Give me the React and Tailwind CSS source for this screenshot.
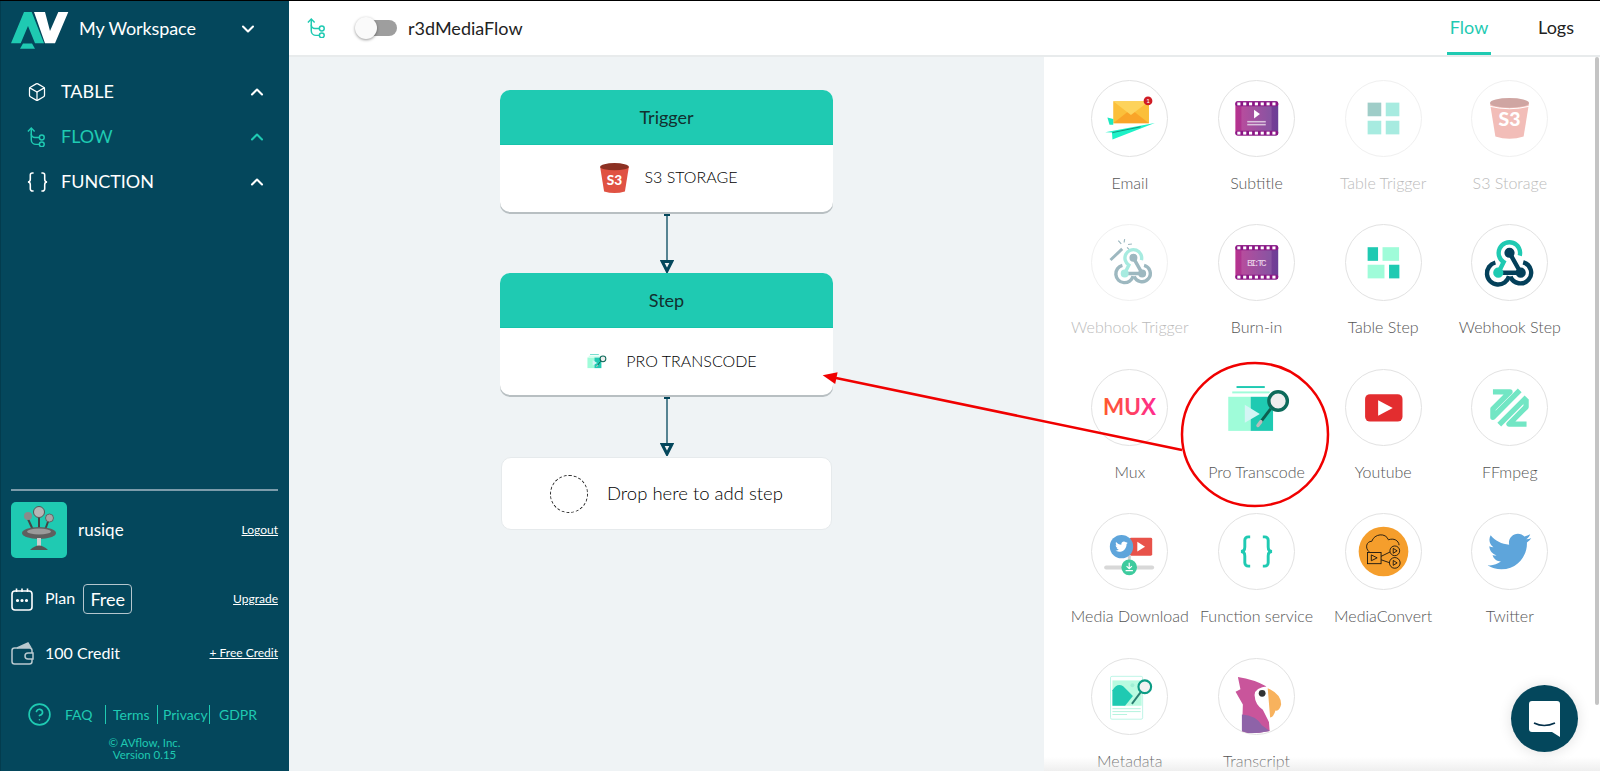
import React from 'react'
import { Box, ChevronDown, ChevronUp, CircleHelp } from 'lucide-react'
import { FaTwitter } from 'react-icons/fa'

function FlowIcon({ className }) {
  return (
    <svg viewBox="0 0 17 19" fill="none" stroke="currentColor" strokeWidth="1.4" className={className}>
      <path d="M0.8 4.2 L4 1 L7.2 4.2" />
      <path d="M4 1 V12 a4.5 4.5 0 0 0 4.5 4.5 H11.6" />
      <path d="M4 6.5 a3.5 3.5 0 0 0 3.5 3.5 H11.6" />
      <circle cx="14" cy="10" r="2.3" />
      <circle cx="14" cy="16.5" r="2.3" />
    </svg>
  )
}

function BraceMarks({ color, width = 3 }) {
  return (
    <g fill="none" stroke={color} strokeWidth={width}>
      <path d="M32 23.5 h-2 a3.5 3.5 0 0 0 -3.5 3.5 v7 q0 4.5 -4 4.5 q4 0 4 4.5 v7 a3.5 3.5 0 0 0 3.5 3.5 h2" />
      <path d="M45 23.5 h2 a3.5 3.5 0 0 1 3.5 3.5 v7 q0 4.5 4 4.5 q-4 0 -4 4.5 v7 a3.5 3.5 0 0 1 -3.5 3.5 h-2" />
    </g>
  )
}

function Logo() {
  return (
    <svg viewBox="0 0 70 50" className="w-[70px] h-[50px] shrink-0 -mt-[6px]">
      <polygon points="11,42.3 24,11 31.7,11 44,42.3 35,42.3 28,25 20.7,42.3" fill="#1fcab2" />
      <polygon points="20,47.7 23,42.5 32,42.5 35,47.7" fill="#1fcab2" />
      <polygon points="34,11 45,11 50,30 58.3,11 68.3,11 55,42.3 45,42.3" fill="#fff" />
    </svg>
  )
}

function Avatar() {
  return (
    <div className="w-14 h-14 rounded-[5px] bg-[#1fcab2] shrink-0 flex items-center justify-center">
      <svg viewBox="0 0 56 56" className="w-14 h-14">
        <g stroke="#444" strokeWidth="2">
          <line x1="17" y1="17" x2="22" y2="28" />
          <line x1="28" y1="13" x2="28" y2="28" />
          <line x1="38" y1="17" x2="34" y2="28" />
        </g>
        <circle cx="17" cy="14" r="4" fill="#8a8a8a" />
        <circle cx="28" cy="10" r="5.5" fill="#b5b5b5" stroke="#555" strokeWidth="1" />
        <circle cx="38.5" cy="16" r="4" fill="#a5a5a5" stroke="#555" strokeWidth="0.8" />
        <ellipse cx="28" cy="31" rx="17" ry="6" fill="#5f5f5f" />
        <ellipse cx="28" cy="29.5" rx="12" ry="3" fill="#9a9a9a" />
        <rect x="26" y="36" width="4" height="10" fill="#ccc" />
        <path d="M19 48 q9 -9 18 0 z" fill="#555" />
      </svg>
    </div>
  )
}

function NavItem({ icon, label, active }) {
  return (
    <div className={`flex items-center h-[45px] pl-[27px] pr-[22px] ${active ? 'text-[#1fcab2]' : 'text-white'}`}>
      <div className="w-[34px] shrink-0">{icon}</div>
      <span className="text-[18px] flex-1">{label}</span>
      <ChevronUp size={20} strokeWidth={2.5} />
    </div>
  )
}

function Sidebar() {
  return (
    <aside className="w-[289px] shrink-0 bg-[#04475c] text-white flex flex-col border-l border-[#033c4e]">
      <div className="flex items-center h-[55px] pr-[31px] -ml-px">
        <Logo />
        <span className="text-[18px] tracking-[-0.1px] ml-[9px] flex-1">My Workspace</span>
        <ChevronDown size={20} strokeWidth={2.5} />
      </div>
      <nav className="pt-[13px] flex flex-col -ml-px">
        <NavItem icon={<Box size={20} strokeWidth={1.5} />} label="TABLE" />
        <NavItem icon={<FlowIcon className="w-[18px] h-[20px]" />} label="FLOW" active />
        <NavItem
          icon={
            <svg viewBox="21 22 35 33" className="w-[21px] h-[20px]">
              <BraceMarks color="#fff" width={2.6} />
            </svg>
          }
          label="FUNCTION"
        />
      </nav>

      <div className="mt-auto pl-[10px] pr-[11px] pb-[10px]">
        <div className="h-0.5 bg-[#7c9cab]" />
        <div className="flex items-center mt-[11px]">
          <Avatar />
          <span className="text-[17px] ml-[11px] flex-1">rusiqe</span>
          <a className="text-[12px] underline">Logout</a>
        </div>
        <div className="flex items-center mt-[26px] h-[30px]">
          <svg viewBox="0 0 22 23" fill="none" stroke="#fff" strokeWidth="1.6" className="w-[22px] h-[23px] shrink-0">
            <rect x="1" y="3" width="20" height="19" rx="3" />
            <path d="M5.5 0.5 V4 M11 0.5 V4 M16.5 0.5 V4" />
            <circle cx="6.5" cy="12.5" r="0.8" fill="#fff" />
            <circle cx="11" cy="12.5" r="0.8" fill="#fff" />
            <circle cx="15.5" cy="12.5" r="0.8" fill="#fff" />
          </svg>
          <span className="text-[16px] ml-3 -mt-[2px]">Plan</span>
          <span className="text-[18px] ml-2 h-[30px] w-[49px] flex items-center justify-center border border-[#b5c6cd] rounded-[4px]">Free</span>
          <a className="text-[12px] underline ml-auto">Upgrade</a>
        </div>
        <div className="flex items-center mt-[26px] h-[26px]">
          <svg viewBox="0 0 23 23" fill="none" stroke="#b9c9cf" strokeWidth="1.5" className="w-[23px] h-[23px] shrink-0">
            <path d="M6 6 L17 1 L20 6" fill="#b9c9cf" />
            <rect x="1" y="6" width="20" height="16" rx="2.5" />
            <path d="M22 11 H17 a3 3 0 0 0 0 6 H22 Z" fill="#04475c" />
          </svg>
          <span className="text-[16px] ml-[11px]">100 Credit</span>
          <a className="text-[12px] underline ml-auto">+ Free Credit</a>
        </div>
        <div className="flex items-center mt-[36px] text-[#1fcab2] text-[14px] pl-[16px]">
          <CircleHelp size={25} strokeWidth={1.6} className="shrink-0" />
          <span className="ml-[13px] w-[40px]">FAQ</span>
          <span className="w-[52px] pl-[7px] border-l border-[#1fcab2] leading-[19px]">Terms</span>
          <span className="w-[52px] pl-[5px] border-l border-[#1fcab2] leading-[19px]">Privacy</span>
          <span className="pl-[9px] border-l border-[#1fcab2] leading-[19px]">GDPR</span>
        </div>
        <div className="mt-[10px] text-center text-[#1fcab2] text-[11.5px] leading-[12px]">
          <div>© AVflow, Inc.</div>
          <div>Version 0.15</div>
        </div>
      </div>
    </aside>
  )
}

function TopBar() {
  return (
    <header className="h-[56px] shrink-0 bg-white border-b-2 border-[#e8ebec] flex items-center pl-[18px] pr-[26px]">
      <FlowIcon className="w-[18px] h-[20px] text-[#1fcab2]" />
      <div className="relative w-[42px] h-[22px] ml-[30px] flex items-center">
        <div className="ml-[11px] w-[31px] h-[16px] rounded-full bg-[#9e9e9e]" />
        <div className="absolute left-0 top-0 w-[22px] h-[22px] rounded-full bg-[#fafafa] shadow-[0_1px_3px_rgba(0,0,0,0.4)]" />
      </div>
      <span className="ml-[11px] text-[18px] text-[#222]">r3dMediaFlow</span>
      <div className="ml-auto flex h-full text-[18px]">
        <div className="relative w-[44px] flex items-center justify-center text-[#1fcab2] pb-px">
          Flow
          <div className="absolute left-0 right-0 bottom-0 h-[3px] bg-[#1fcab2]" />
        </div>
        <div className="ml-[47px] flex items-center text-[#222] pb-px">Logs</div>
      </div>
    </header>
  )
}

function S3Bucket({ className }) {
  return (
    <svg viewBox="17 16 43 46" className={className}>
      <path d="M18.5 23 L24 57 Q38.5 61.5 53 57 L58.5 23 Z" fill="#e05243" />
      <ellipse cx="38.5" cy="22.5" rx="20" ry="5" fill="#8c3123" />
      <text x="38.5" y="48" textAnchor="middle" fontSize="19" fontWeight="900" fill="#fff" fontFamily="Lato, sans-serif">S3</text>
    </svg>
  )
}

function ProTranscodeMarks() {
  return (
    <g>
      <rect x="18" y="16.5" width="29" height="2" fill="#1fcab2" />
      <rect x="13.6" y="22" width="38.4" height="2" fill="#9ffcd9" />
      <rect x="9.5" y="27.5" width="23" height="35" fill="#9ffcd9" />
      <rect x="32.5" y="27.5" width="23" height="35" fill="#1fcab2" />
      <polygon points="26.5,35.8 41.9,45.2 26.5,54.2" fill="#d4f5f5" />
      <line x1="53" y1="40" x2="43" y2="53" stroke="#0d5f50" strokeWidth="3" />
      <line x1="43" y1="53" x2="40" y2="57" stroke="#bbb" strokeWidth="3.5" strokeLinecap="round" />
      <circle cx="60.7" cy="31.8" r="9.5" fill="#eee" stroke="#0d6a5a" strokeWidth="3.5" />
    </g>
  )
}

function FlowArrow() {
  return (
    <div className="flex justify-center h-[61px]">
      <svg viewBox="0 0 14 61" className="w-[14px] h-[61px]">
        <rect x="4" y="2" width="6" height="2" fill="#04475c" />
        <line x1="7" y1="3" x2="7" y2="50" stroke="#04475c" strokeWidth="1.3" />
        <path d="M2.2 49.5 H11.8 L7 59 Z" fill="none" stroke="#04475c" strokeWidth="3" />
      </svg>
    </div>
  )
}

function NodeCard({ title, children }) {
  return (
    <div className="rounded-[10px] bg-white shadow-[0_2px_0_#b8bfc2] overflow-hidden">
      <div className="h-[55px] bg-[#1fcab2] flex items-center justify-center text-[18px] text-[#12302f] border-b border-[#17c3aa]">{title}</div>
      <div className="h-[67px] flex items-center justify-center text-[16px] font-light text-[#000]">{children}</div>
    </div>
  )
}

function Canvas() {
  return (
    <div className="flex-1 bg-[#eff3f5] pl-[211px] pt-[33px]">
      <div className="w-[333px]">
        <NodeCard title="Trigger">
          <div className="flex items-center pl-[3px] -mt-[3px]">
            <S3Bucket className="w-[31px] h-[33px] mt-[3px]" />
            <span className="ml-[15px]">S3 STORAGE</span>
          </div>
        </NodeCard>
        <FlowArrow />
        <NodeCard title="Step">
          <div className="flex items-center pl-[11px] -mt-[2px]">
            <svg viewBox="8 14 66 50" className="w-[20px] h-[16px]">
              <ProTranscodeMarks />
            </svg>
            <span className="ml-[19px]">PRO TRANSCODE</span>
          </div>
        </NodeCard>
        <FlowArrow />
        <div className="mx-px mt-px h-[73px] bg-white rounded-[10px] border border-[#e6eaec] flex items-center pl-[48px] text-[18.5px] font-light text-[#000]">
          <div className="w-[38px] h-[38px] rounded-full border border-dashed border-[#222]" />
          <span className="ml-[19px]">Drop here to add step</span>
        </div>
      </div>
    </div>
  )
}

function FilmStrip({ children }) {
  const holes = [0, 1, 2, 3, 4, 5, 6]
  return (
    <g>
      <defs>
        <linearGradient id="film" x1="0" x2="1" y1="0" y2="0">
          <stop offset="0" stopColor="#b8338f" />
          <stop offset="1" stopColor="#6a3f97" />
        </linearGradient>
      </defs>
      <rect x="16.8" y="20.8" width="44" height="35.2" rx="3" fill="url(#film)" />
      <rect x="16.8" y="20.8" width="44" height="5" rx="2" fill="#8a1585" />
      <rect x="16.8" y="51" width="44" height="5" rx="2" fill="#8a1585" />
      <rect x="23" y="26" width="31" height="25" fill="#fff" opacity="0.12" />
      {holes.map((i) => (
        <g key={i} fill="#fff">
          <rect x={18.8 + i * 6} y="22" width="3.2" height="3" />
          <rect x={18.8 + i * 6} y="52" width="3.2" height="3" />
        </g>
      ))}
      {children}
    </g>
  )
}

function WebhookMarks({ teal, light, dark }) {
  return (
    <g fill="none" strokeWidth="4.5">
      <path d="M27 49 L32.5 38 A 11 11 0 1 1 49 31.5" stroke={teal} />
      <path d="M38.5 28.5 L50 49 M27 49 H50" stroke={dark} />
      <path d="M24 38.5 A 11.5 11.5 0 1 0 38 52.5" stroke={dark} />
      <path d="M52.5 38.3 A 11 11 0 1 1 39.5 53" stroke={dark} />
      <circle cx="38.5" cy="28.5" r="3" fill={dark} stroke={dark} />
      <circle cx="50" cy="49" r="3" fill={dark} stroke={dark} />
      <circle cx="27" cy="49" r="3" fill={light} stroke={light} />
    </g>
  )
}

const ICONS = {
  email: (
    <g>
      <rect x="21.8" y="20.8" width="36.7" height="22.5" fill="#fbbf3a" />
      <path d="M21.8 43.3 L40 29 L58.5 43.3 Z" fill="#f9a428" />
      <path d="M21.8 20.8 L40 35 L58.5 20.8 Z" fill="#fdd35c" />
      <circle cx="57.5" cy="20.5" r="4.5" fill="#d01c24" />
      <text x="57.5" y="22.8" textAnchor="middle" fontSize="6.5" fill="#fff" fontFamily="Lato, sans-serif">1</text>
      <polygon points="15.8,37.5 21.8,39 21.8,45 18,45" fill="#1de9c0" />
      <polygon points="13.5,52.5 64.5,43 21,60 20.5,53" fill="#1df2c8" />
      <line x1="21" y1="53" x2="50" y2="47" stroke="#0f6b5c" strokeWidth="0.7" />
    </g>
  ),
  subtitle: (
    <FilmStrip>
      <polygon points="36,29.5 42,34 36,38.5" fill="#fff" />
      <rect x="29" y="41" width="19" height="1.6" fill="#d9c2dc" />
      <rect x="29" y="44" width="19" height="1.6" fill="#d9c2dc" />
    </FilmStrip>
  ),
  tableTrigger: (
    <g>
      <rect x="22.2" y="22.2" width="14" height="14" fill="#9fcdc8" />
      <rect x="40.8" y="22.2" width="14" height="14" fill="#a7ebe0" />
      <rect x="22.2" y="40.8" width="14" height="14" fill="#a7ebe0" />
      <rect x="40.8" y="40.8" width="14" height="14" fill="#a7ebe0" />
    </g>
  ),
  s3: (
    <g>
      <path d="M18.5 23 L24 57 Q38.5 61.5 53 57 L58.5 23 Z" fill="#f2bdb8" />
      <path d="M18.5 26 Q38.5 31 58.5 26" stroke="#fff" strokeWidth="1" fill="none" />
      <ellipse cx="38.5" cy="22.5" rx="20" ry="5" fill="#cfa5a2" />
      <text x="38.5" y="46.5" textAnchor="middle" fontSize="20" fontWeight="900" fill="#fff" fontFamily="Lato, sans-serif">S3</text>
    </g>
  ),
  webhookTrigger: (
    <g>
      <line x1="19" y1="36" x2="31" y2="24.5" stroke="#9db8c0" strokeWidth="3" />
      <path d="M27 16 L30 19.5 M33.5 14.5 L33 18 M41 19.5 L37 20 M36 23 L39 26" stroke="#9db8c0" strokeWidth="1.2" />
      <g transform="translate(12.5 11.5) scale(0.78)">
        <WebhookMarks teal="#a7ebe0" light="#a7ebe0" dark="#9db8c0" />
      </g>
    </g>
  ),
  burnin: (
    <FilmStrip>
      <text x="38.8" y="42" textAnchor="middle" fontSize="10" fill="#ead6ea" fontFamily="Liberation Mono, monospace" textLength="20">BI:TC</text>
    </FilmStrip>
  ),
  tableStep: (
    <g>
      <rect x="22.2" y="22.8" width="10.7" height="14" fill="#1fcab2" />
      <rect x="37.5" y="22.8" width="17" height="14" fill="#9ffcd9" />
      <rect x="22.2" y="40.8" width="17.3" height="14" fill="#9ffcd9" />
      <rect x="44.2" y="40.8" width="10.6" height="14" fill="#1fcab2" />
    </g>
  ),
  webhookStep: <WebhookMarks teal="#1fcab2" light="#1fcab2" dark="#04405a" />,
  mux: (
    <g>
      <defs>
        <linearGradient id="mux" x1="0" x2="1" y1="0" y2="0">
          <stop offset="0" stopColor="#ff5a2c" />
          <stop offset="1" stopColor="#ff2b8f" />
        </linearGradient>
      </defs>
      <text x="38.5" y="46" textAnchor="middle" fontSize="23" fontWeight="700" fill="url(#mux)" fontFamily="Lato, sans-serif">MUX</text>
    </g>
  ),
  youtube: (
    <g>
      <rect x="19.6" y="24.8" width="38.4" height="28.2" rx="5" fill="#e32d2f" />
      <polygon points="33,31 48,39 33,47" fill="#fff" />
    </g>
  ),
  ffmpeg: (
    <g fill="none" stroke="#72e6c4" strokeWidth="5.5" strokeLinejoin="round">
      <path d="M21.5 22.5 H39 L21.5 40 V48.5 L49 21" />
      <path d="M28 56 L56 28" />
      <path d="M55.5 30 V38 L38 55.5 H56" />
    </g>
  ),
  mediaDownload: (
    <g>
      <rect x="38.8" y="24.5" width="23" height="18.3" rx="1.5" fill="#e8524a" />
      <polygon points="46.5,28.5 54.5,33.5 46.5,38.5" fill="#fff" />
      <rect x="36.8" y="42" width="3" height="12" fill="#cfcfcf" />
      <rect x="12.5" y="52.8" width="51.3" height="4.2" rx="2" fill="#d8d8d8" />
      <circle cx="30.3" cy="33.5" r="12" fill="#5ea5db" />
      <FaTwitter x="23.8" y="27" size="13" color="#fff" />
      <circle cx="38.2" cy="54.8" r="8" fill="#3ecb9e" />
      <path d="M38.2 50 V56 M35.5 53.5 L38.2 56.2 L41 53.5 M34.5 58.2 H42" stroke="#fff" strokeWidth="1.2" fill="none" />
    </g>
  ),
  functionService: <BraceMarks color="#1fcab2" />,
  mediaConvert: (
    <g>
      <circle cx="38.5" cy="38.5" r="25.5" fill="#f59e2c" />
      <g fill="none" stroke="#111" strokeWidth="0.9">
        <path d="M24 39 C19 35 21 28 26.5 28 C29 20 41 19 43.5 26.5 C49 24.5 54 27 54.5 32" />
        <rect x="22" y="39.5" width="14" height="11.5" />
        <polygon points="26,42 32,45 26,48" />
        <circle cx="50.1" cy="37.8" r="5" />
        <polygon points="48.5,35.3 52.5,37.8 48.5,40.3" />
        <circle cx="50.1" cy="50.2" r="5.5" />
        <polygon points="48.5,47.7 52.5,50.2 48.5,52.7" />
        <path d="M36 43.5 L45.2 39 M36 47 L44.6 50" />
      </g>
    </g>
  ),
  twitter: <FaTwitter x="16" y="16" size="45" color="#5ea5db" />,
  metadata: (
    <g>
      <rect x="19" y="17.8" width="33" height="44" rx="1.5" fill="#fff" stroke="#bdf5e6" strokeWidth="1" />
      <rect x="21" y="22" width="30" height="26" fill="#b8fbe0" />
      <path d="M21 48 V32 Q26 24 32 28 L42 38 L34 48 Z" fill="#1fcab2" />
      <circle cx="41.5" cy="27" r="2" fill="#9ff0d5" />
      <line x1="41" y1="46" x2="50" y2="34" stroke="#2a7f72" strokeWidth="2" />
      <circle cx="54.2" cy="28.5" r="6.5" fill="#f2f2f2" stroke="#0c9c85" strokeWidth="2.2" />
      <path d="M21 51 H50 M21 54 H50 M21 57 H36" stroke="#9ff0d5" strokeWidth="0.8" />
    </g>
  ),
  transcript: (
    <g>
      <path d="M19.4 18.5 Q36 21 48.4 28 L52 74 Q38 77 23.5 76 L24.5 46.8 L17 33.5 L22 31 Z" fill="#c9559b" />
      <path d="M23.5 57 Q38 58 44 68 L52 74 Q38 77 23.5 76 Z" fill="#8e63a8" />
      <path d="M50 28 Q37 29 36.5 37 Q37 47 45 52 L53 68 Z" fill="#fff" />
      <circle cx="44.3" cy="35.2" r="3.5" fill="#333" />
      <path d="M50 30 Q64 36 63.8 46.8 Q62 54 58 53 Q56 60 52.5 60 Z" fill="#f8b25d" />
    </g>
  ),
}

const TOOLS = [
  { name: 'Email', icon: 'email', text: 'text-[#555]' },
  { name: 'Subtitle', icon: 'subtitle', text: 'text-[#555]' },
  { name: 'Table Trigger', icon: 'tableTrigger', text: 'text-[#bbb]', faded: true },
  { name: 'S3 Storage', icon: 's3', text: 'text-[#bbb]', faded: true },
  { name: 'Webhook Trigger', icon: 'webhookTrigger', text: 'text-[#bbb]', faded: true },
  { name: 'Burn-in', icon: 'burnin', text: 'text-[#555]' },
  { name: 'Table Step', icon: 'tableStep', text: 'text-[#555]' },
  { name: 'Webhook Step', icon: 'webhookStep', text: 'text-[#555]' },
  { name: 'Mux', icon: 'mux', text: 'text-[#555]' },
  { name: 'Pro Transcode', icon: 'pro', text: 'text-[#555]', bare: true },
  { name: 'Youtube', icon: 'youtube', text: 'text-[#555]' },
  { name: 'FFmpeg', icon: 'ffmpeg', text: 'text-[#555]' },
  { name: 'Media Download', icon: 'mediaDownload', text: 'text-[#555]' },
  { name: 'Function service', icon: 'functionService', text: 'text-[#555]' },
  { name: 'MediaConvert', icon: 'mediaConvert', text: 'text-[#555]' },
  { name: 'Twitter', icon: 'twitter', text: 'text-[#555]' },
  { name: 'Metadata', icon: 'metadata', text: 'text-[#555]' },
  { name: 'Transcript', icon: 'transcript', text: 'text-[#555]' },
]

function ToolItem({ tool }) {
  const ring = tool.bare ? 'border-transparent' : tool.faded ? 'border-[#f0f0f0]' : 'border-[#e2e2e2]'
  return (
    <div className="flex flex-col items-center">
      <div className={`w-[77px] h-[77px] rounded-full border ${ring} overflow-hidden shrink-0`}>
        <svg viewBox="0 0 77 77" className="w-[75px] h-[75px]">
          {tool.bare ? <ProTranscodeMarks /> : ICONS[tool.icon]}
        </svg>
      </div>
      <span className={`mt-[16px] text-[16px] font-light leading-5 whitespace-nowrap ${tool.text}`}>{tool.name}</span>
    </div>
  )
}

function Palette() {
  return (
    <div className="relative w-[556px] shrink-0 bg-white overflow-hidden pl-[22.5px] pt-[22.5px]">
      <div className="grid grid-cols-[repeat(4,126.67px)] auto-rows-[144.5px]">
        {TOOLS.map((tool) => (
          <ToolItem key={tool.name} tool={tool} />
        ))}
      </div>
      <div className="absolute right-[1px] top-0 w-[4px] h-[648px] rounded-full bg-[#c4c4c4]" />
      <div className="absolute left-0 right-0 bottom-0 h-[14px] bg-gradient-to-b from-transparent to-[#e8e8e8]/70" />
    </div>
  )
}

function ChatButton() {
  return (
    <div className="absolute left-[1511px] top-[684px] w-[67px] h-[67px] rounded-full bg-[#04475c] shadow-[0_1px_14px_rgba(0,0,0,0.12)] flex items-center justify-center">
      <svg viewBox="0 0 31 36" className="w-[31px] h-[36px]">
        <path d="M3 0 H28 a3 3 0 0 1 3 3 V36 L23 31 H3 a3 3 0 0 1 -3 -3 V3 a3 3 0 0 1 3 -3 Z" fill="#fff" />
        <path d="M5 22 Q15 27 26 22" fill="none" stroke="#04304a" strokeWidth="1.6" />
      </svg>
    </div>
  )
}

function Annotation() {
  return (
    <svg viewBox="0 0 1600 771" className="absolute inset-0 w-[1600px] h-[771px] pointer-events-none">
      <ellipse cx="1255" cy="433.5" rx="73" ry="71.5" fill="none" stroke="#f00000" strokeWidth="2.5" />
      <line x1="1182" y1="449" x2="836" y2="377" stroke="#f00000" strokeWidth="2.5" />
      <polygon points="822.7,374.3 837.6,371.3 835.2,383.1" fill="#f00000" />
    </svg>
  )
}

export default function App() {
  return (
    <div className="relative w-[1600px] h-[771px] overflow-hidden border-t border-black flex font-['Lato',sans-serif]">
      <Sidebar />
      <div className="flex-1 flex flex-col min-w-0">
        <TopBar />
        <div className="flex-1 flex min-h-0">
          <Canvas />
          <Palette />
        </div>
      </div>
      <ChatButton />
      <Annotation />
    </div>
  )
}
